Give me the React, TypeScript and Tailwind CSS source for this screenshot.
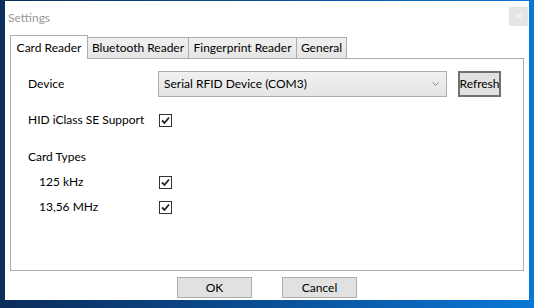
import React from "react";

function CheckBox() {
  return (
    <div className="w-[13px] h-[13px] border border-[#333] bg-white flex items-center justify-center">
      <svg width="9" height="9" viewBox="0 0 9 9">
        <path d="M1 4.5 L3.5 7 L8 1.5" fill="none" stroke="#222" strokeWidth="1.8" />
      </svg>
    </div>
  );
}

function Tab({ label, width, active }: { label: string; width: string; active?: boolean }) {
  if (active) {
    return (
      <div className={`relative z-10 -mb-px h-[24px] ${width} border border-b-0 border-[#acacac] bg-white flex items-center justify-center whitespace-nowrap`}>
        {label}
      </div>
    );
  }
  return (
    <div className={`h-[21px] ${width} border border-l-0 border-b-0 border-[#acacac] bg-gradient-to-b from-[#f0f0f0] to-[#e5e5e5] flex items-center justify-center whitespace-nowrap`}>
      {label}
    </div>
  );
}

function Button({ label }: { label: string }) {
  return (
    <div className="w-[75px] h-[21px] border border-[#adadad] bg-[#e1e1e1] flex items-center justify-center">
      {label}
    </div>
  );
}

export default function App() {
  return (
    <div
      className="w-[534px] h-[308px] overflow-hidden bg-gradient-to-r from-[#0b2d5a] via-[#0a4f96] to-[#0a78d7] pl-[5px] pt-[1px] text-[12px] text-black"
      style={{ fontFamily: '"Lato", "Noto Sans", sans-serif' }}
    >
      <div className="w-[524px] h-[299px] bg-white flex flex-col">
        {/* title bar */}
        <div className="h-[34px] flex items-start justify-between">
          <span className="pl-[3px] pt-[8px] text-[#999]">Settings</span>
          <div className="mt-[6px] mr-[1px] w-[19px] h-[19px] bg-[#e5e5e5] flex items-center justify-center text-[#f8f8f8] text-[11px]">
            ✕
          </div>
        </div>

        {/* tabs */}
        <div className="pl-[5px] pr-[5px]">
          <div className="flex items-end h-[23px]">
            <Tab label="Card Reader" width="w-[78px]" active />
            <Tab label="Bluetooth Reader" width="w-[101px]" />
            <Tab label="Fingerprint Reader" width="w-[108px]" />
            <Tab label="General" width="w-[50px]" />
          </div>
          <div className="h-[213px] border border-[#acacac] pt-[12px] pl-[17px] pr-[22px]">
            <div className="flex items-center h-[26px]">
              <span className="w-[130px]">Device</span>
              <div className="w-[289px] h-[26px] border border-[#acacac] bg-gradient-to-b from-[#f0f0f0] to-[#e5e5e5] flex items-center justify-between pl-[5px] pr-[7px]">
                <span>Serial RFID Device (COM3)</span>
                <svg width="7" height="4" viewBox="0 0 7 4">
                  <path d="M0.5 0.5 L3.5 3.5 L6.5 0.5" fill="none" stroke="#888" strokeWidth="1" />
                </svg>
              </div>
              <div className="ml-[11px] w-[43px] h-[26px] border-2 border-[#707070] bg-[#e1e1e1] flex items-center justify-center">
                Refresh
              </div>
            </div>
            <div className="flex items-center h-[20px] mt-[13px]">
              <span className="w-[131px]">HID iClass SE Support</span>
              <CheckBox />
            </div>
            <div className="flex items-center h-[20px] mt-[17px]">
              <span>Card Types</span>
            </div>
            <div className="flex items-center h-[20px] mt-[5px]">
              <span className="w-[131px] pl-[11px]">125 kHz</span>
              <CheckBox />
            </div>
            <div className="flex items-center h-[20px] mt-[5px]">
              <span className="w-[131px] pl-[11px]">13,56 MHz</span>
              <CheckBox />
            </div>
          </div>
        </div>

        {/* footer */}
        <div className="flex justify-center gap-[30px] pt-[6px]">
          <Button label="OK" />
          <Button label="Cancel" />
        </div>
      </div>
    </div>
  );
}
